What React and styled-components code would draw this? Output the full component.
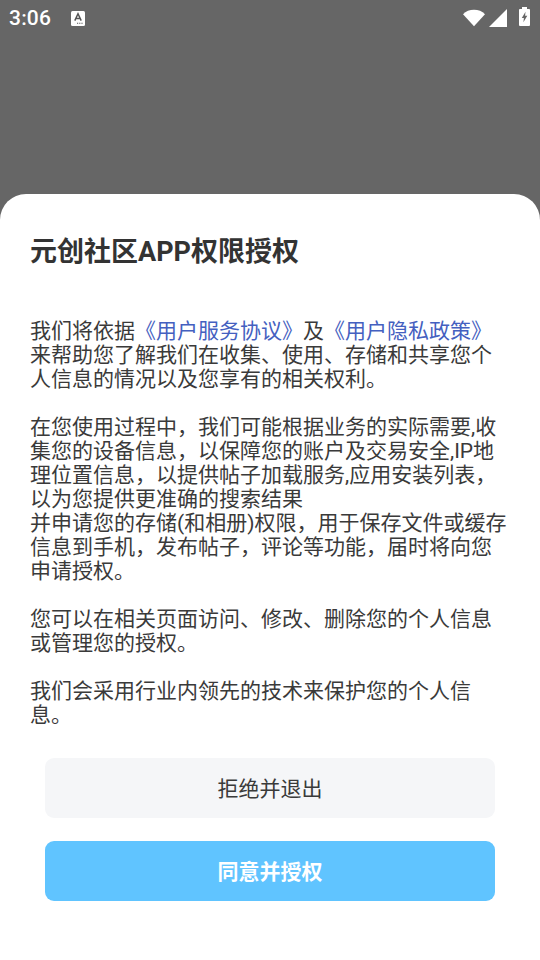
import React from 'react'
import styled, { createGlobalStyle } from 'styled-components'

const cjk = `Roboto, "Noto Sans CJK SC", "Noto Sans", sans-serif`

const GlobalStyle = createGlobalStyle`
  html, body {
    margin: 0;
    padding: 0;
    background: #666666;
  }
  * {
    box-sizing: border-box;
  }
`

const Screen = styled.div`
  width: 540px;
  height: 960px;
  background: #666666;
  display: flex;
  flex-direction: column;
  overflow: hidden;
`

const StatusBar = styled.div`
  height: 36px;
  padding: 0 10px 0 9px;
  display: flex;
  align-items: center;
  color: #ffffff;
`

const Clock = styled.span`
  font-family: Roboto, sans-serif;
  font-size: 21px;
  font-weight: 500;
  letter-spacing: 0.2px;
  width: 62px;
`

const StatusRight = styled.div`
  margin-left: auto;
  display: flex;
  align-items: center;
  gap: 4px;
`

const BatterySlot = styled.span`
  display: flex;
  margin: 0 0 3px 8px;
`

const Sheet = styled.div`
  margin-top: auto;
  height: 766px;
  background: #ffffff;
  border-radius: 26px 26px 0 0;
  padding: 41px 30px 0;
  display: flex;
  flex-direction: column;
  font-family: ${cjk};
`

const Title = styled.h1`
  margin: 0;
  font-size: 27px;
  line-height: 34px;
  font-weight: 700;
  color: #333333;
`

const Body = styled.p`
  margin: 50px 0 0;
  font-size: 21px;
  line-height: 24px;
  color: #3a3a3a;
`

const Policy = styled.span`
  color: #4460c0;
`

const Actions = styled.div`
  margin-top: 31px;
  padding: 0 15px;
  display: flex;
  flex-direction: column;
  gap: 23px;
`

const ActionButton = styled.button`
  height: 60px;
  padding: 0 0 2px;
  border: none;
  border-radius: 9px;
  font-family: ${cjk};
  font-size: 21px;
  font-weight: ${p => (p.$primary ? 700 : 400)};
  color: ${p => (p.$primary ? '#ffffff' : '#3a3a3a')};
  background: ${p => (p.$primary ? '#60c4ff' : '#f5f6f8')};
`

const KeyboardIcon = () => (
  <svg width="14" height="15" viewBox="0 0 14 15" fill="none">
    <rect width="14" height="15" rx="1.5" fill="#ffffff" />
    <path d="M3.800 9.600 7 2.800l3.200 6.800M5 7.400h4" stroke="#555555" strokeWidth="1.5" />
    <path d="M6 12.200h1.200M8.200 12.200h1.200M10.400 12.200h1.200" stroke="#555555" strokeWidth="1.1" />
  </svg>
)

const WifiIcon = () => (
  <svg width="22" height="18" viewBox="0 0 22 18">
    <path d="M0 5.200C2.800 2.300 6.700.8 11 .8s8.200 1.500 11 4.400L11 17.200Z" fill="#ffffff" />
  </svg>
)

const SignalIcon = () => (
  <svg width="18" height="18" viewBox="0 0 18 18">
    <path d="M18 0v18H0Z" fill="#ffffff" />
  </svg>
)

const BatteryIcon = () => (
  <svg width="11" height="19" viewBox="0 0 11 20" preserveAspectRatio="none">
    <path
      fillRule="evenodd"
      d="M3 0h5v2h2a1 1 0 0 1 1 1v16a1 1 0 0 1-1 1H1a1 1 0 0 1-1-1V3a1 1 0 0 1 1-1h2ZM6.500 5 2.800 11.500h2.100L4.400 16l3.900-6.700H6.100Z"
      fill="#ffffff"
    />
  </svg>
)

const App = () => (
  <Screen>
    <GlobalStyle />
    <StatusBar>
      <Clock>3:06</Clock>
      <KeyboardIcon />
      <StatusRight>
        <WifiIcon />
        <SignalIcon />
        <BatterySlot>
          <BatteryIcon />
        </BatterySlot>
      </StatusRight>
    </StatusBar>
    <Sheet>
      <Title>元创社区APP权限授权</Title>
      <Body>
        我们将依据<Policy>《用户服务协议》</Policy>及<Policy>《用户隐私政策》</Policy>来帮助您了解我们在收集、使用、存储和共享您个人信息的情况以及您享有的相关权利。
        <br />
        <br />
        在您使用过程中，我们可能根据业务的实际需要,收集您的设备信息，以保障您的账户及交易安全,IP地理位置信息，以提供帖子加载服务,应用安装列表，以为您提供更准确的搜索结果
        <br />
        并申请您的存储(和相册)权限，用于保存文件或缓存信息到手机，发布帖子，评论等功能，届时将向您申请授权。
        <br />
        <br />
        您可以在相关页面访问、修改、删除您的个人信息或管理您的授权。
        <br />
        <br />
        我们会采用行业内领先的技术来保护您的个人信息。
      </Body>
      <Actions>
        <ActionButton>拒绝并退出</ActionButton>
        <ActionButton $primary>同意并授权</ActionButton>
      </Actions>
    </Sheet>
  </Screen>
)

export default App
